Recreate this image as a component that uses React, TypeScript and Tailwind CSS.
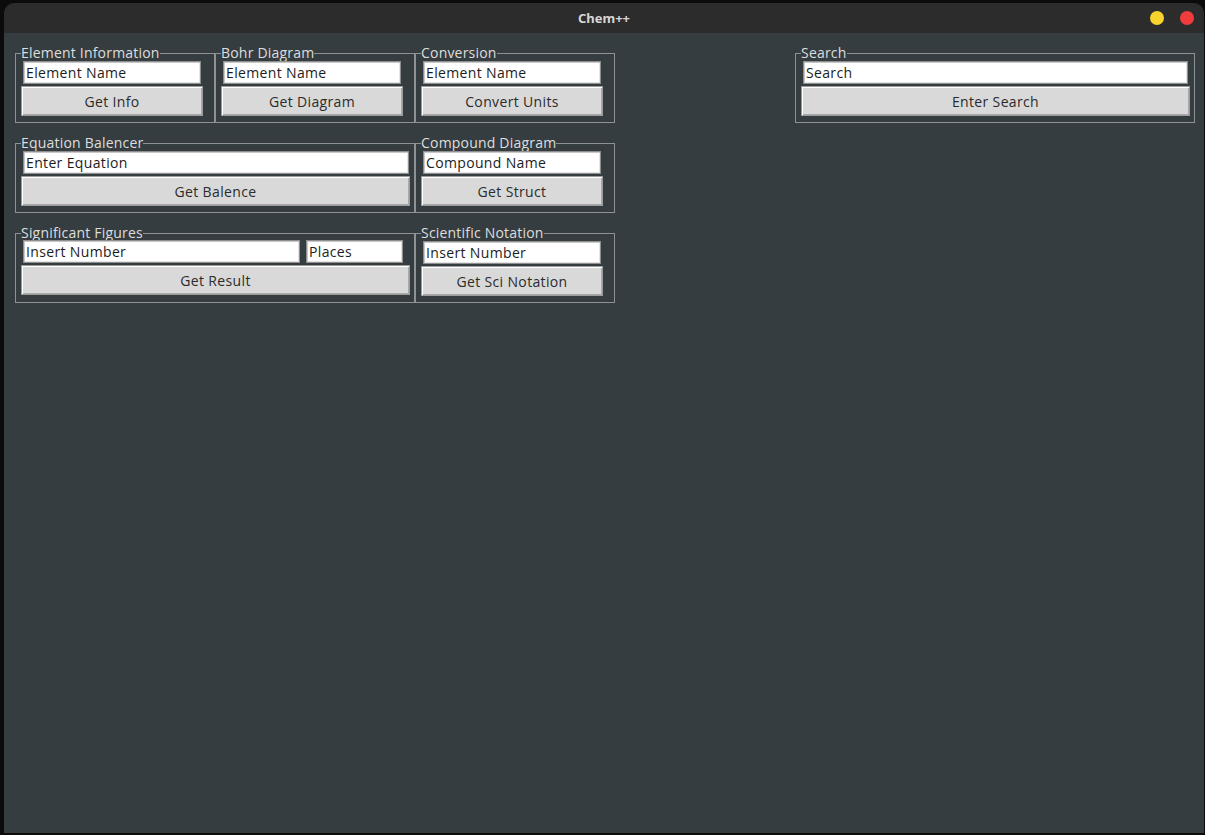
// Chem++ main window: grouped tools laid out as Tk-style label frames
import React from "react";

const font = { fontFamily: '"Open Sans", "Liberation Sans", sans-serif' };

// Cadre avec légende sur la bordure
function Group({ title, width, children }: { title: string; width: string; children: React.ReactNode }) {
	return (
		<fieldset className={`${width} h-[78px] border border-[#8d9295] pl-[5px] pr-0 pt-0 pb-[4px] shrink-0 min-w-0`}>
			<legend className="text-[14px] leading-[16px] tracking-[0.2px] text-[#dedede]">{title}</legend>
			<div className="-mt-[1px] flex flex-col gap-[2px]">{children}</div>
		</fieldset>
	);
}

function Entry({ value, width }: { value: string; width: string }) {
	return (
		<input
			defaultValue={value}
			className={`${width} h-[23px] bg-white border border-[#8f8f8f] shadow-[inset_1px_1px_0_#c8c8c8,inset_-1px_-1px_0_#e4e4e4] px-[2px] text-[14px] tracking-[0.35px] text-[#1c1c1c] outline-none`}
			style={font}
		/>
	);
}

function Button({ label, width }: { label: string; width: string }) {
	return (
		<button
			className={`${width} h-[30px] bg-[#d9d9d9] border border-[#9c9c9c] shadow-[inset_1px_1px_0_#ffffff,inset_-1px_-1px_0_#a9a9a9] text-[14px] tracking-[0.35px] text-[#2b2b2b]`}
			style={font}
		>
			{label}
		</button>
	);
}

export default function App() {
	return (
		<div className="w-[1205px] h-[835px] bg-[#0b0b0b] pt-[3px] pl-[4px] pr-[1px] pb-[2px]" style={font}>
			<div className="w-full h-full flex flex-col rounded-t-[10px] overflow-hidden">
				{/* Barre de titre */}
				<div className="h-[30px] bg-[#2c2c2c] flex items-center justify-center relative">
					<span className="text-[13px] font-bold text-[#d6d6d6] mt-[2px]" style={{ fontFamily: '"Noto Sans", "DejaVu Sans", sans-serif' }}>
						Chem++
					</span>
					<div className="absolute right-[10px] top-[8px] flex gap-[16px]">
						<span className="w-[14px] h-[14px] rounded-full bg-[#f6d32d]" />
						<span className="w-[14px] h-[14px] rounded-full bg-[#f03c3c]" />
					</div>
				</div>

				{/* Corps */}
				<div className="flex-1 bg-[#363d40] pl-[11px] pt-[12px] flex flex-col gap-[12px]">
					{/* Ligne 1 */}
					<div className="flex">
						<Group title="Element Information" width="w-[200px]">
							<div className="pl-[2px]"><Entry value="Element Name" width="w-[178px]" /></div>
							<Button label="Get Info" width="w-[182px]" />
						</Group>
						<Group title="Bohr Diagram" width="w-[200px]">
							<div className="pl-[2px]"><Entry value="Element Name" width="w-[178px]" /></div>
							<Button label="Get Diagram" width="w-[182px]" />
						</Group>
						<Group title="Conversion" width="w-[200px]">
							<div className="pl-[2px]"><Entry value="Element Name" width="w-[178px]" /></div>
							<Button label="Convert Units" width="w-[182px]" />
						</Group>
						<div className="w-[180px] shrink-0" />
						<Group title="Search" width="w-[400px]">
							<div className="pl-[2px]"><Entry value="Search" width="w-[385px]" /></div>
							<Button label="Enter Search" width="w-[389px]" />
						</Group>
					</div>

					{/* Ligne 2 */}
					<div className="flex">
						<Group title="Equation Balencer" width="w-[400px]">
							<div className="pl-[2px]"><Entry value="Enter Equation" width="w-[386px]" /></div>
							<Button label="Get Balence" width="w-[389px]" />
						</Group>
						<Group title="Compound Diagram" width="w-[200px]">
							<div className="pl-[2px]"><Entry value="Compound Name" width="w-[178px]" /></div>
							<Button label="Get Struct" width="w-[182px]" />
						</Group>
					</div>

					{/* Ligne 3 */}
					<div className="flex">
						<Group title="Significant Figures" width="w-[400px]">
							<div className="pl-[2px] flex gap-[6px]">
								<Entry value="Insert Number" width="w-[277px]" />
								<Entry value="Places" width="w-[97px]" />
							</div>
							<Button label="Get Result" width="w-[389px]" />
						</Group>
						<Group title="Scientific Notation" width="w-[200px]">
							<div className="pl-[2px]"><Entry value="Insert Number" width="w-[178px]" /></div>
							<Button label="Get Sci Notation" width="w-[182px]" />
						</Group>
					</div>
				</div>
			</div>
		</div>
	);
}
